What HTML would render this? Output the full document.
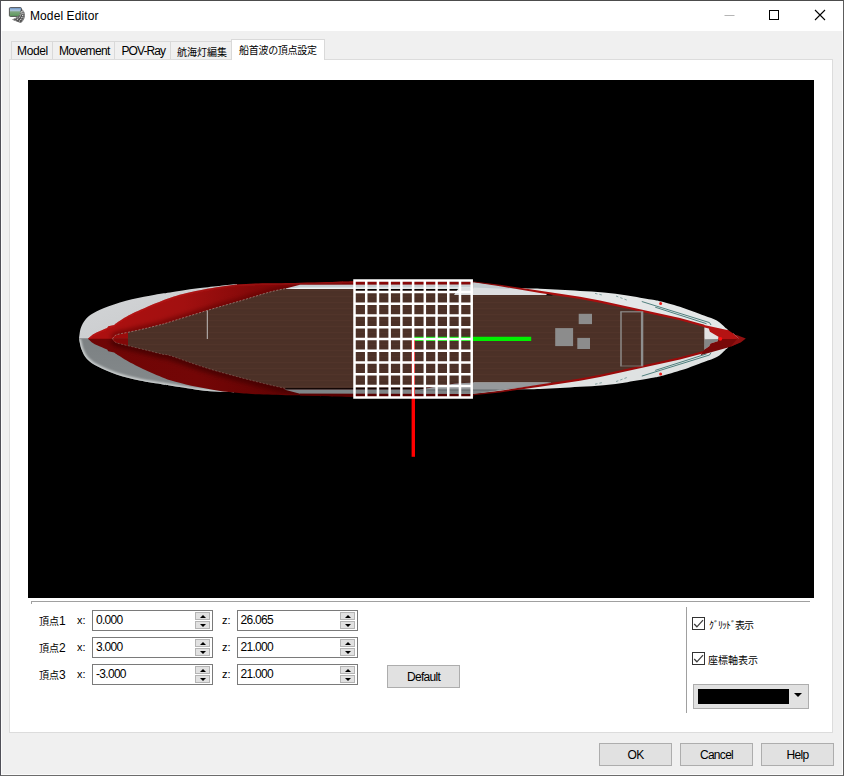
<!DOCTYPE html>
<html><head><meta charset="utf-8"><title>Model Editor</title>
<style>
*{box-sizing:border-box;margin:0;padding:0}
html,body{width:844px;height:776px;overflow:hidden;background:#f0f0f0}
body{position:relative;font-family:"Liberation Sans",sans-serif;font-size:12px;color:#000}
.abs{position:absolute}
.jp{position:absolute;overflow:visible}
.jp text{font-family:"Liberation Sans","Noto Sans CJK JP",sans-serif;font-size:10px;fill:#000}
#frame{position:absolute;left:0;top:0;width:844px;height:776px;border:1px solid #6c6c6c;border-top-color:#4c4c4c;border-right-color:#5c5c5c;border-left-color:#505058;pointer-events:none}
#frame2{position:absolute;left:1px;top:31px;width:842px;height:744px;border:1px solid #fbfbfb;border-top:none;pointer-events:none}
#title{position:absolute;left:1px;top:1px;width:842px;height:30px;background:#fff}
#ttext{position:absolute;left:30px;top:9px;font-size:12px;line-height:14px;letter-spacing:0.1px;white-space:nowrap}
.tab{position:absolute;top:41px;height:18px;border:1px solid #d9d9d9;border-bottom:none;background:#f0f0f0;font-size:12px;line-height:19px;white-space:nowrap;padding-left:6px;letter-spacing:-0.35px}
#page{position:absolute;left:9px;top:59px;width:824px;height:674px;background:#fff;border:1px solid #dcdcdc}
#view{position:absolute;left:28px;top:80px;width:786px;height:518px;background:#000;overflow:hidden}
.spin{position:absolute;width:122px;height:21px;border:1px solid #7a7a7a;background:#fff;font-size:12px;line-height:18px;padding-left:4px;letter-spacing:-0.7px;white-space:nowrap}
.sb{position:absolute;right:2px;width:15px;height:8px;background:#e1e1e1;border:1px solid #b4b4b4}
.sb.up{top:1px}.sb.dn{top:10px}
.sb:after{content:"";position:absolute;left:3.5px;top:2px;border:3px solid transparent}
.sb.up:after{border-bottom-color:#000;border-top-width:0;top:1.5px}
.sb.dn:after{border-top-color:#000;border-bottom-width:0;top:1.5px}
.lbl{position:absolute;font-size:12px;line-height:14px;white-space:nowrap;letter-spacing:-0.5px}
.btn{position:absolute;height:23px;background:#e1e1e1;border:1px solid #adadad;text-align:center;font-size:12px;line-height:23px;letter-spacing:-0.7px}
.chk{position:absolute;width:13px;height:13px;border:1px solid #333;background:#fff}
</style></head><body>
<div id="title"></div>
<svg class="abs" style="left:0;top:0" width="32" height="30" viewBox="0 0 32 30">
<defs><linearGradient id="sky" x1="0" y1="0" x2="0" y2="1"><stop offset="0" stop-color="#6f9cd4"/><stop offset="0.32" stop-color="#a8c0d8"/><stop offset="0.5" stop-color="#7ca47c"/><stop offset="1" stop-color="#5a9a5c"/></linearGradient></defs>
<rect x="9.400" y="7.6" width="12" height="8.8" rx="0.9" fill="url(#sky)" stroke="#484848" stroke-width="0.9"/>
<path d="M21.6 9.300C23.2 9.8 25.4 12.5 24.900 16C24.5 19 23 21.400 21.1 22.8C19.5 22.6 14 20.6 12.1 19.4C15 18.6 18.500 16.400 19.600 14.200C20.300 12.800 20.600 11.500 20.800 9.800Z" fill="#444" fill-opacity="0.9"/>
<path d="M22.400 10.500C23.700 13.500 22.500 18.500 18.800 21.700M21.400 11.200C21.900 14.500 19.500 18.500 15.600 20.500" fill="none" stroke="#fafafa" stroke-width="0.9" stroke-dasharray="1.3 0.9"/>
<path d="M23.500 10.700C25 14 24 19 21.300 22.300M20.900 12C20.500 15 17.500 18 13 19.500" fill="none" stroke="#e8e8e8" stroke-width="0.6" stroke-dasharray="1.2 0.8"/>
</svg>
<div id="ttext">Model Editor</div>
<!-- caption buttons -->
<svg class="abs" style="left:715px;top:5px" width="125" height="22" viewBox="0 0 125 22">
<path d="M9.5 10.5 H19.5" stroke="#b5b5b5" stroke-width="1"/>
<rect x="54.500" y="5.500" width="9" height="9" fill="none" stroke="#000" stroke-width="1"/>
<path d="M100 5 L110 15 M110 5 L100 15" stroke="#000" stroke-width="1.1"/>
</svg>

<div id="page"></div>
<div class="tab" style="left:11px;width:42px;padding-left:5px">Model</div>
<div class="tab" style="left:52px;width:63px;letter-spacing:-0.68px">Movement</div>
<div class="tab" style="left:114px;width:57px;letter-spacing:-0.9px;padding-left:6.5px">POV-Ray</div>
<div class="tab" style="left:170px;width:62px"></div>
<div class="tab" style="left:231px;width:94px;top:39px;height:21px;background:#fff"></div>
<svg class="jp" style="left:176.500px;top:44px" width="52" height="16" viewBox="0 -12 52 16"><text x="0" y="0">航海灯編集</text></svg>
<svg class="jp" style="left:239px;top:41.600px" width="80" height="16" viewBox="0 -12 80 16"><text x="0" y="0" textLength="78" lengthAdjust="spacing">船首波の頂点設定</text></svg>

<div id="view"><svg class="abs" style="left:0;top:0" width="786" height="518" viewBox="28 80 786 518">
<defs>
<linearGradient id="gRedU" gradientUnits="userSpaceOnUse" x1="88" y1="0" x2="473" y2="0"><stop offset="0" stop-color="#ae1010"/><stop offset="0.25" stop-color="#a21010"/><stop offset="0.42" stop-color="#860909"/><stop offset="0.68" stop-color="#760606"/><stop offset="0.7" stop-color="#8c0808"/><stop offset="1" stop-color="#8c0808"/></linearGradient>
<linearGradient id="gRedL" gradientUnits="userSpaceOnUse" x1="88" y1="0" x2="360" y2="0"><stop offset="0" stop-color="#6e0505"/><stop offset="0.4" stop-color="#740606"/><stop offset="0.7" stop-color="#640303"/><stop offset="1" stop-color="#540101"/></linearGradient>
<linearGradient id="gWU" x1="0" y1="0" x2="1" y2="1"><stop offset="0" stop-color="#d4d6d8"/><stop offset="1" stop-color="#c6c8ca"/></linearGradient>
<linearGradient id="gWL" x1="0" y1="0" x2="0" y2="1"><stop offset="0" stop-color="#7c8183"/><stop offset="1" stop-color="#858a8c"/></linearGradient>
<pattern id="wood" x="0" y="0" width="40" height="6" patternUnits="userSpaceOnUse"><rect width="40" height="6" fill="#4c3127"/><rect y="2" width="40" height="1" fill="#51342a"/><rect y="4.5" width="40" height="0.8" fill="#4a2f26"/></pattern>
</defs>
<path fill="url(#gWU)" d="M79.0 338.8C79.3 337.0 79.7 331.2 80.8 328.0C81.9 324.8 83.4 321.8 85.5 319.4C87.6 316.9 89.3 315.5 93.2 313.3C97.1 311.1 102.2 308.6 108.7 306.3C115.2 304.0 124.2 301.2 131.9 299.3C139.6 297.4 148.7 295.8 155.0 294.7C161.3 293.6 162.8 293.7 170.0 292.6C177.2 291.5 186.8 289.7 198.0 288.3C209.2 286.9 230.5 284.7 237.0 284.0L237 338.8Z"/>
<path fill="url(#gWL)" d="M79.0 338.8C79.4 340.6 80.3 346.2 81.6 349.6C82.9 353.0 84.3 356.1 87.0 358.9C89.7 361.7 92.9 364.0 97.8 366.6C102.7 369.2 109.4 372.1 116.4 374.4C123.4 376.7 131.9 378.9 139.6 380.6C147.3 382.3 157.7 383.6 162.8 384.4C167.9 385.2 164.1 384.6 170.0 385.5C175.9 386.4 190.1 388.8 198.4 389.9C206.7 390.9 214.1 391.4 220.0 391.8C225.9 392.2 231.7 392.3 234.0 392.4L234 338.8Z"/>
<clipPath id="cRU"><path d="M87.8 338.9C88.7 338.1 91.2 335.6 93.2 334.3C95.2 333.0 97.7 332.1 100.0 331.0C102.3 329.9 105.9 328.5 107.1 328.0L108.3 326.2L114.2 325.0L115.4 323.8C117.6 322.4 123.1 318.4 128.4 315.5C133.7 312.6 142.3 309.0 147.4 306.7C152.5 304.4 155.2 303.4 159.2 301.9C163.1 300.4 167.1 298.8 171.1 297.5C175.1 296.2 178.1 295.2 182.9 294.0C187.7 292.8 194.7 291.4 200.0 290.3C205.3 289.2 208.9 288.6 215.0 287.6C221.1 286.7 228.9 285.3 236.8 284.6C244.7 283.9 253.5 283.6 262.4 283.3C271.3 283.0 277.6 283.3 290.0 283.0C302.4 282.7 326.3 282.0 337.0 281.7C347.7 281.4 351.2 281.4 354.0 281.3L473.5 281.6L473.5 338.8Z"/></clipPath>
<clipPath id="cRL"><path d="M87.8 338.7C88.7 339.5 91.2 342.0 93.2 343.3C95.2 344.6 97.7 345.4 100.0 346.4C102.3 347.4 105.9 348.9 107.1 349.4L108.3 351.2L114.2 352.4L115.4 353.6C117.6 354.9 123.1 358.6 128.4 361.5C133.7 364.4 142.3 368.6 147.4 371.0C152.5 373.4 155.2 374.4 159.2 376.0C163.1 377.6 165.8 379.0 171.1 380.6C176.4 382.2 184.4 384.2 191.3 385.7C198.2 387.2 205.6 388.5 212.7 389.7C219.8 390.9 226.9 391.9 234.0 392.6C241.1 393.4 246.0 393.8 255.3 394.2C264.6 394.6 280.0 394.9 290.0 395.2C300.0 395.5 304.8 395.6 315.5 395.9C326.2 396.1 347.6 396.6 354.0 396.7L473.5 396.4L473.5 338.8Z"/></clipPath>
<clipPath id="cWL"><path d="M79.0 338.8C79.4 340.6 80.3 346.2 81.6 349.6C82.9 353.0 84.3 356.1 87.0 358.9C89.7 361.7 92.9 364.0 97.8 366.6C102.7 369.2 109.4 372.1 116.4 374.4C123.4 376.7 131.9 378.9 139.6 380.6C147.3 382.3 157.7 383.6 162.8 384.4C167.9 385.2 164.1 384.6 170.0 385.5C175.9 386.4 190.1 388.8 198.4 389.9C206.7 390.9 214.1 391.4 220.0 391.8C225.9 392.2 231.7 392.3 234.0 392.4L234 338.8Z"/></clipPath>
<filter id="bl2" x="-10%%" y="-50%%" width="120%%" height="200%%"><feGaussianBlur stdDeviation="2.2"/></filter>
<filter id="bl1" x="-10%%" y="-50%%" width="120%%" height="200%%"><feGaussianBlur stdDeviation="1.2"/></filter>
<g clip-path="url(#cWL)"><path fill="none" stroke="#cdd1d1" stroke-width="3.6" filter="url(#bl1)" d="M79.0 338.8C79.4 340.6 80.3 346.2 81.6 349.6C82.9 353.0 84.3 356.1 87.0 358.9C89.7 361.7 92.9 364.0 97.8 366.6C102.7 369.2 109.4 372.1 116.4 374.4C123.4 376.7 131.9 378.9 139.6 380.6C147.3 382.3 157.7 383.6 162.8 384.4C167.9 385.2 164.1 384.6 170.0 385.5C175.9 386.4 190.1 388.8 198.4 389.9C206.7 390.9 214.1 391.4 220.0 391.8C225.9 392.2 231.7 392.3 234.0 392.4"/></g>
<path fill="url(#gRedU)" d="M87.8 338.9C88.7 338.1 91.2 335.6 93.2 334.3C95.2 333.0 97.7 332.1 100.0 331.0C102.3 329.9 105.9 328.5 107.1 328.0L108.3 326.2L114.2 325.0L115.4 323.8C117.6 322.4 123.1 318.4 128.4 315.5C133.7 312.6 142.3 309.0 147.4 306.7C152.5 304.4 155.2 303.4 159.2 301.9C163.1 300.4 167.1 298.8 171.1 297.5C175.1 296.2 178.1 295.2 182.9 294.0C187.7 292.8 194.7 291.4 200.0 290.3C205.3 289.2 208.9 288.6 215.0 287.6C221.1 286.7 228.9 285.3 236.8 284.6C244.7 283.9 253.5 283.6 262.4 283.3C271.3 283.0 277.6 283.3 290.0 283.0C302.4 282.7 326.3 282.0 337.0 281.7C347.7 281.4 351.2 281.4 354.0 281.3L473.5 281.6L473.5 338.8Z"/>
<path fill="url(#gRedL)" d="M87.8 338.7C88.7 339.5 91.2 342.0 93.2 343.3C95.2 344.6 97.7 345.4 100.0 346.4C102.3 347.4 105.9 348.9 107.1 349.4L108.3 351.2L114.2 352.4L115.4 353.6C117.6 354.9 123.1 358.6 128.4 361.5C133.7 364.4 142.3 368.6 147.4 371.0C152.5 373.4 155.2 374.4 159.2 376.0C163.1 377.6 165.8 379.0 171.1 380.6C176.4 382.2 184.4 384.2 191.3 385.7C198.2 387.2 205.6 388.5 212.7 389.7C219.8 390.9 226.9 391.9 234.0 392.6C241.1 393.4 246.0 393.8 255.3 394.2C264.6 394.6 280.0 394.9 290.0 395.2C300.0 395.5 304.8 395.6 315.5 395.9C326.2 396.1 347.6 396.6 354.0 396.7L473.5 396.4L473.5 338.8Z"/>
<g clip-path="url(#cRU)"><path fill="none" stroke="#5a0202" stroke-opacity="0.6" stroke-width="7" filter="url(#bl2)" d="M112.5 338.8C113.2 338.1 113.8 336.0 116.4 334.9C119.0 333.8 122.8 333.4 128.0 332.3C133.2 331.2 141.6 329.4 147.4 328.0C153.2 326.6 159.0 325.1 162.8 324.1C166.6 323.1 162.6 324.2 170.0 321.9C177.4 319.6 195.2 314.1 207.0 310.5C218.8 306.9 230.7 303.7 241.1 300.6C251.5 297.5 262.1 294.1 269.5 292.1C276.9 290.1 282.8 289.2 285.5 288.6L473 288.6"/><path fill="none" stroke="#c82020" stroke-opacity="0.5" stroke-width="2.5" filter="url(#bl1)" d="M87.8 338.9C88.7 338.1 91.2 335.6 93.2 334.3C95.2 333.0 97.7 332.1 100.0 331.0C102.3 329.9 105.9 328.5 107.1 328.0L108.3 326.2L114.2 325.0L115.4 323.8C117.6 322.4 123.1 318.4 128.4 315.5C133.7 312.6 142.3 309.0 147.4 306.7C152.5 304.4 155.2 303.4 159.2 301.9C163.1 300.4 167.1 298.8 171.1 297.5C175.1 296.2 178.1 295.2 182.9 294.0C187.7 292.8 194.7 291.4 200.0 290.3C205.3 289.2 208.9 288.6 215.0 287.6C221.1 286.7 228.9 285.3 236.8 284.6C244.7 283.9 253.5 283.6 262.4 283.3C271.3 283.0 277.6 283.3 290.0 283.0C302.4 282.7 326.3 282.0 337.0 281.7C347.7 281.4 351.2 281.4 354.0 281.3"/></g>
<g clip-path="url(#cRL)"><path fill="none" stroke="#3a0000" stroke-opacity="0.7" stroke-width="9" filter="url(#bl2)" d="M112.5 338.8C113.2 339.4 113.8 341.6 116.4 342.7C119.0 343.8 122.8 344.4 128.0 345.7C133.2 347.0 141.6 349.0 147.4 350.4C153.2 351.8 159.0 353.4 162.8 354.3C166.6 355.2 162.9 353.4 170.0 355.6C177.1 357.8 193.7 364.0 205.5 367.7C217.3 371.4 230.4 374.8 241.1 377.7C251.8 380.6 262.1 383.0 269.5 384.8C276.9 386.6 282.8 387.9 285.5 388.5L473 388.5"/></g>
<path fill="#e4e7e7" d="M518.0 288.3C521.7 288.4 533.0 288.5 540.0 288.7C547.0 288.9 553.3 289.3 560.0 289.7C566.7 290.1 572.7 290.4 580.0 290.9C587.3 291.3 595.8 291.6 603.7 292.4C611.6 293.1 619.5 294.2 627.4 295.4C635.3 296.6 645.5 298.5 651.1 299.5C656.8 300.5 656.0 300.2 661.3 301.6C666.6 303.0 675.6 305.5 682.7 307.8C689.8 310.1 698.3 313.5 704.0 315.6C709.7 317.7 713.2 318.6 716.8 320.6C720.3 322.6 723.4 326.1 725.3 327.7C727.2 329.3 727.2 328.6 728.2 330.5C729.2 332.4 730.5 337.4 731.0 338.8L473.5 338.8L473.5 282.2L500 285.5Z"/>
<path fill="#dfe2e2" d="M518.0 389.3C521.7 389.2 533.0 389.1 540.0 388.9C547.0 388.7 553.3 388.3 560.0 387.9C566.7 387.5 572.7 387.2 580.0 386.7C587.3 386.3 595.8 386.0 603.7 385.2C611.6 384.5 619.5 383.4 627.4 382.2C635.3 381.0 645.5 379.1 651.1 378.1C656.8 377.1 656.0 377.4 661.3 376.0C666.6 374.6 675.6 372.1 682.7 369.8C689.8 367.5 698.3 364.1 704.0 362.0C709.7 359.9 713.2 359.0 716.8 357.0C720.3 355.0 723.4 351.6 725.3 349.9C727.2 348.3 727.2 349.0 728.2 347.1C729.2 345.2 730.5 340.2 731.0 338.8L473.5 338.8L473.5 394L500 391.6Z"/>
<path fill="url(#wood)" d="M112.5 338.8C113.2 338.1 113.8 336.0 116.4 334.9C119.0 333.8 122.8 333.4 128.0 332.3C133.2 331.2 141.6 329.4 147.4 328.0C153.2 326.6 159.0 325.1 162.8 324.1C166.6 323.1 162.6 324.2 170.0 321.9C177.4 319.6 195.2 314.1 207.0 310.5C218.8 306.9 230.7 303.7 241.1 300.6C251.5 297.5 262.1 294.1 269.5 292.1C276.9 290.1 282.8 289.2 285.5 288.6L354 288.6L354 290.6L473.5 290.6L473.5 295L547 295L553 294L580 297.9L600 301.7L640 310.4L680 319.2L704.6 325.8L704.6 351.8L680 358.4L640 367.2L600 375.9L580 379.6L553 383.6L547 382.6L473.5 382.6L455 383.2L421 388.2L285.5 388.4L285.5 388.5C282.8 387.9 276.9 386.6 269.5 384.8C262.1 383.0 251.8 380.6 241.1 377.7C230.4 374.8 217.3 371.4 205.5 367.7C193.7 364.0 177.1 357.8 170.0 355.6C162.9 353.4 166.6 355.2 162.8 354.3C159.0 353.4 153.2 351.8 147.4 350.4C141.6 349.0 133.2 347.0 128.0 345.7C122.8 344.4 119.0 343.8 116.4 342.7C113.8 341.6 113.2 339.4 112.5 338.8Z"/>
<path fill="#9c0c0c" d="M128 332.3L116.4 334.9C113 336 112.500 338 112.500 338.8L128 338.8Z"/>
<path fill="#820808" d="M128 345.7L116.4 342.7C113 341.6 112.500 339.6 112.500 338.8L128 338.8Z"/>
<path fill="none" stroke="#d8cfc8" stroke-opacity="0.75" stroke-width="0.6" stroke-dasharray="2 1.5" d="M112.5 338.8C113.2 338.1 113.8 336.0 116.4 334.9C119.0 333.8 122.8 333.4 128.0 332.3C133.2 331.2 141.6 329.4 147.4 328.0C153.2 326.6 159.0 325.1 162.8 324.1C166.6 323.1 162.6 324.2 170.0 321.9C177.4 319.6 195.2 314.1 207.0 310.5C218.8 306.9 230.7 303.7 241.1 300.6C251.5 297.5 262.1 294.1 269.5 292.1C276.9 290.1 282.8 289.2 285.5 288.6"/>
<path fill="none" stroke="#a88880" stroke-opacity="0.7" stroke-width="0.6" stroke-dasharray="2 1.5" d="M112.5 338.8C113.2 339.4 113.8 341.6 116.4 342.7C119.0 343.8 122.8 344.4 128.0 345.7C133.2 347.0 141.6 349.0 147.4 350.4C153.2 351.8 159.0 353.4 162.8 354.3C166.6 355.2 162.9 353.4 170.0 355.6C177.1 357.8 193.7 364.0 205.5 367.7C217.3 371.4 230.4 374.8 241.1 377.7C251.8 380.6 262.1 383.0 269.5 384.8C276.9 386.6 282.8 387.9 285.5 388.5"/>
<path stroke="#cfcfcf" stroke-width="0.9" d="M207.3 310.5V339"/>
<path fill="#c6ced2" d="M285.7 288.6L300 284.7L473.5 284.500L473.5 289L286 289Z"/>
<path fill="#000" d="M354 288.7H470.500L466 290.7H354Z"/>
<path fill="#f2f4f4" d="M285.7 288.9L300 287.5L473.5 287.5L473.5 288.7L286 288.9Z"/>
<path fill="#dcdee0" d="M454 295L458 289L473.5 288.5L473.5 283L500 286L547 293.700L545 295Z"/>
<path fill="#c2cace" d="M473.5 282.3L522 289.3L473.5 287.6Z"/>
<path fill="#000" d="M545.5 295.2L548 293.6L553.500 294.600L552 295.4Z"/>
<path fill="#000" d="M285.5 388.2H424L420 389.400H285.5Z"/>
<path fill="#7e8486" d="M284 389.4L421 389.4L455 384.2L473.5 383.6L551 383.4L473.5 393.9L300 393.7Z"/>
<path fill="#96999c" d="M421 389.400L455 383.4L473.5 382.6L551 382.6L551 383.4L500 389.7Z"/>
<path fill="#6e7376" d="M420 389.3L500 389.500L490 391L420 390.800Z"/>
<path fill="#5a0000" d="M300 393.700L473.5 393.9L473.5 396.6L354 396.7L300 395.4Z"/>
<linearGradient id="gLn" gradientUnits="userSpaceOnUse" x1="473" y1="0" x2="540" y2="0"><stop offset="0" stop-color="#7a0606"/><stop offset="1" stop-color="#aa0e0e"/></linearGradient>
<path fill="url(#gLn)" d="M473.5 281.4L500.0 284.8L540.0 290.8L580.0 296.8L600.0 300.6L640.0 309.3L680.0 318.1L704.4 324.8L704.4 326.9L680.0 320.2L640.0 311.4L600.0 302.8L580.0 298.9L540.0 292.9L500.0 286.2L473.5 282.2Z"/>
<linearGradient id="gLn2" gradientUnits="userSpaceOnUse" x1="473" y1="0" x2="540" y2="0"><stop offset="0" stop-color="#6a0404"/><stop offset="1" stop-color="#9a0a0a"/></linearGradient>
<path fill="url(#gLn2)" d="M473.5 394.0L500.0 390.8L540.0 384.6L580.0 378.6L600.0 374.8L640.0 366.1L680.0 357.3L704.4 350.8L704.4 352.9L680.0 359.4L640.0 368.2L600.0 376.9L580.0 380.7L540.0 386.7L500.0 392.4L473.5 395.2Z"/>
<rect x="555.2" y="328.1" width="17.9" height="18" fill="#8c8c8c"/>
<rect x="578.7" y="313.8" width="13.3" height="10.3" fill="#8c8c8c"/>
<rect x="577.3" y="337.9" width="12.7" height="11.1" fill="#8c8c8c"/>
<path fill="none" stroke="#8c8a88" stroke-width="1.5" d="M621 366.3V311.8"/>
<path fill="none" stroke="#8c8a88" stroke-width="1.2" d="M620.3 311.8H641"/>
<path fill="none" stroke="#7c7470" stroke-width="0.9" d="M620.3 366H641"/>
<path fill="none" stroke="#8e8e8e" stroke-width="2.4" d="M642.1 311.2V366.4"/>
<path fill="#e2e2e2" d="M704.6 327.4L708.8 328.5L709.9 331.7L718.4 336.7L718.4 339L704.6 339.2Z"/>
<path fill="#848686" d="M704.6 339.2L718.4 339.1L717.7 341.3L710.6 343.4L709.2 346.3L704.6 349.4Z"/>
<path fill="#b41313" d="M700.5 324.3L728.4 330.3L738.3 337L740 339L718.4 339L718.4 336.7L709.9 331.7L708.8 328.5L704.6 327.4Z"/>
<path fill="#780808" d="M718.4 339L740 339L741 342L729.8 347L700.5 355.200L704.6 349.4L709.2 346.3L710.6 343.4L717.7 341.3Z"/>
<path fill="#901010" d="M736 334.8L745.8 338.5L741 342.2L730.500 346.800L737 339Z"/>
<path fill="none" stroke="#d08080" stroke-width="0.5" d="M733 333.2L738.600 338.5"/>
<circle cx="720.3" cy="338.8" r="1.9" fill="#ff1010"/>
<circle cx="660.6" cy="303.5" r="1.5" fill="#f01818"/>
<circle cx="660.6" cy="374.1" r="1.5" fill="#f01818"/>
<path fill="none" stroke="#3e7472" stroke-width="0.9" d="M641.8 301.5L709.5 322.6L711 325M655.2 307.2L706.500 323.700"/>
<path fill="none" stroke="#3e7472" stroke-width="0.9" d="M641.8 376.1L709.5 355L711 352.600M655.2 370.4L706.500 353.900"/>
<path fill="none" stroke="#7a9a98" stroke-width="0.9" stroke-dasharray="2.5 2" d="M595 293.4L603 295.2M616 296L628 300.5"/>
<path fill="none" stroke="#7a9a98" stroke-width="0.9" stroke-dasharray="2.5 2" d="M595 384.2L603 382.400M616 381.600L628 377.100"/>
<path stroke="#00f000" stroke-width="4.3" d="M413.3 338.9H531.2"/>
<path stroke="#ff0000" stroke-width="3.4" d="M413.3 339.2V456.8"/>
<path stroke="#fff" stroke-width="2.5" fill="none" d="M354.50 279.300V398.7M353.25 280.40H472.95M366.22 279.300V398.7M353.25 292.12H472.95M377.94 279.300V398.7M353.25 303.84H472.95M389.66 279.300V398.7M353.25 315.56H472.95M401.38 279.300V398.7M353.25 327.28H472.95M413.10 279.300V398.7M353.25 339.00H472.95M424.82 279.300V398.7M353.25 350.72H472.95M436.54 279.300V398.7M353.25 362.44H472.95M448.26 279.300V398.7M353.25 374.16H472.95M459.98 279.300V398.7M353.25 385.88H472.95M471.70 279.300V398.7M353.25 397.60H472.95"/>
</svg></div>

<div class="abs" style="left:31px;top:601px;width:779px;height:1px;background:#a0a0a0"></div>
<div class="abs" style="left:31px;top:601px;width:1px;height:3px;background:#a0a0a0"></div>
<div class="abs" style="left:686px;top:607px;width:1px;height:106px;background:#a0a0a0"></div>

<svg class="jp" style="left:39px;top:613px" width="22" height="16" viewBox="0 -12 22 16"><text x="0" y="0">頂点</text></svg><svg class="jp" style="left:39px;top:640px" width="22" height="16" viewBox="0 -12 22 16"><text x="0" y="0">頂点</text></svg><svg class="jp" style="left:39px;top:667px" width="22" height="16" viewBox="0 -12 22 16"><text x="0" y="0">頂点</text></svg>
<div class="lbl" style="left:59px;top:614px">1</div>
<div class="lbl" style="left:59px;top:641px">2</div>
<div class="lbl" style="left:59px;top:668px">3</div>
<div class="lbl" style="left:77px;top:613px;font-size:11px;letter-spacing:0">x:</div>
<div class="lbl" style="left:77px;top:640px;font-size:11px;letter-spacing:0">x:</div>
<div class="lbl" style="left:77px;top:667px;font-size:11px;letter-spacing:0">x:</div>
<div class="lbl" style="left:222px;top:613px;font-size:11px;letter-spacing:0">z:</div>
<div class="lbl" style="left:222px;top:640px;font-size:11px;letter-spacing:0">z:</div>
<div class="lbl" style="left:222px;top:667px;font-size:11px;letter-spacing:0">z:</div>

<div class="spin" style="left:92px;top:610px;width:121px;padding-left:3px">0.000<i class="sb up"></i><i class="sb dn"></i></div>
<div class="spin" style="left:92px;top:637px;width:121px;padding-left:3px">3.000<i class="sb up"></i><i class="sb dn"></i></div>
<div class="spin" style="left:92px;top:664px;width:121px;padding-left:3px">-3.000<i class="sb up"></i><i class="sb dn"></i></div>
<div class="spin" style="left:237px;top:610px;width:121px;padding-left:2.5px">26.065<i class="sb up"></i><i class="sb dn"></i></div>
<div class="spin" style="left:237px;top:637px;width:121px;padding-left:2.5px">21.000<i class="sb up"></i><i class="sb dn"></i></div>
<div class="spin" style="left:237px;top:664px;width:121px;padding-left:2.5px">21.000<i class="sb up"></i><i class="sb dn"></i></div>

<div class="btn" style="left:387px;top:665px;width:73px">Default</div>

<div class="chk" style="left:692px;top:617px"></div>
<div class="chk" style="left:692px;top:652px"></div>
<svg class="abs" style="left:692px;top:617px" width="13" height="13"><path d="M2.2 7 L4.9 9.800 L11 3.2" fill="none" stroke="#3c3c3c" stroke-width="1.25"/></svg>
<svg class="abs" style="left:692px;top:652px" width="13" height="13"><path d="M2.2 7 L4.9 9.800 L11 3.2" fill="none" stroke="#3c3c3c" stroke-width="1.25"/></svg>
<svg class="jp" style="left:708px;top:617px" width="47" height="16" viewBox="0 -12 47 16"><text x="0" y="0" textLength="45" lengthAdjust="spacing">ｸﾞﾘｯﾄﾞ表示</text></svg><svg class="jp" style="left:708px;top:652px" width="52" height="16" viewBox="0 -12 52 16"><text x="0" y="0">座標軸表示</text></svg>

<div class="abs" style="left:693px;top:684px;width:116px;height:25px;background:#e1e1e1;border:1px solid #adadad"></div>
<div class="abs" style="left:698px;top:689px;width:91px;height:15px;background:#000"></div>
<div class="abs" style="left:794px;top:693px;border:4px solid transparent;border-top-color:#000;border-bottom-width:0"></div>

<div class="btn" style="left:599px;top:743px;width:73px">OK</div>
<div class="btn" style="left:680px;top:743px;width:73px">Cancel</div>
<div class="btn" style="left:761px;top:743px;width:73px">Help</div>
<div id="frame2"></div><div id="frame"></div>
</body></html>
